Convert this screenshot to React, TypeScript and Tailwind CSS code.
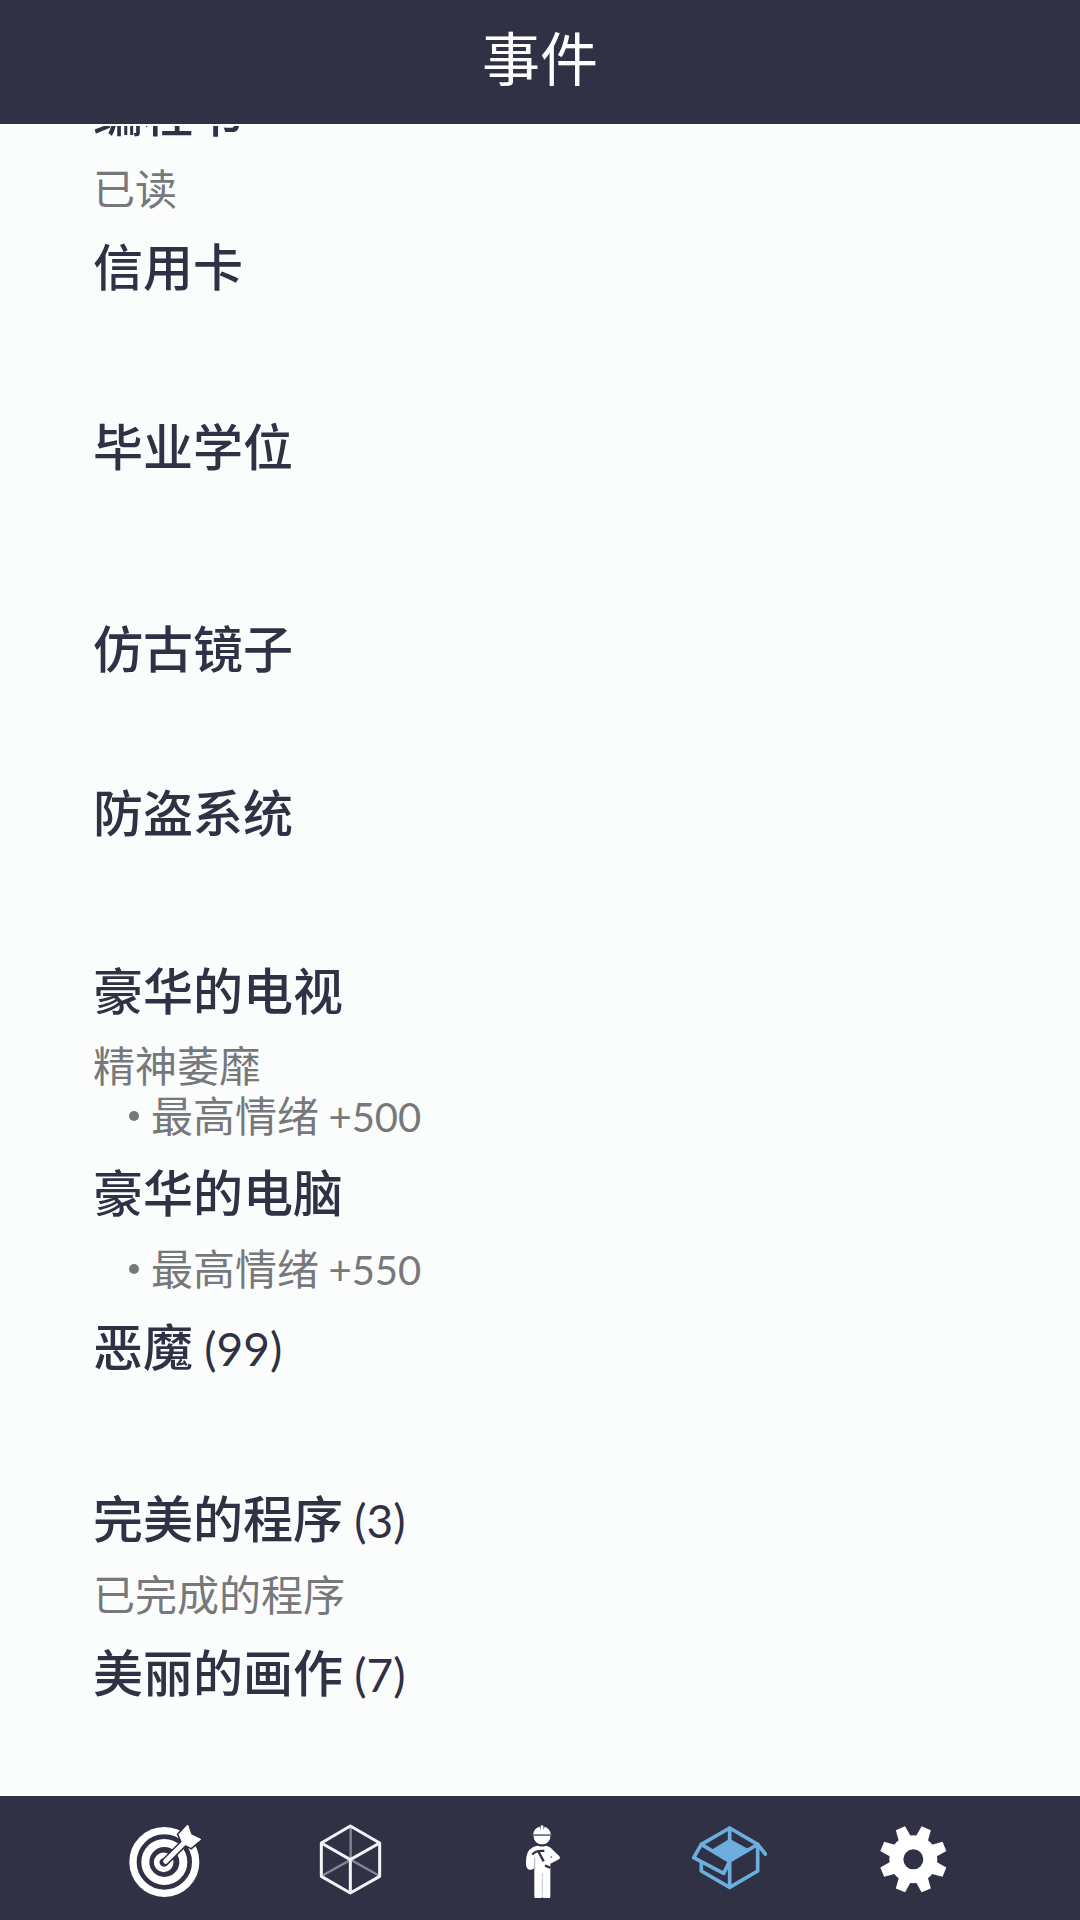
import type { ReactNode } from "react";

type Item = {
  title: string;
  count?: number;
  note?: string;
  effect?: string;
  value?: string;
  space?: string;
};

const items: Item[] = [
  { title: "编程书", note: "已读" },
  { title: "信用卡", space: "h-[78px]" },
  { title: "毕业学位", space: "h-[100px]" },
  { title: "仿古镜子", space: "h-[62px]" },
  { title: "防盗系统", space: "h-[76px]" },
  { title: "豪华的电视", note: "精神萎靡", effect: "最高情绪", value: "+500" },
  { title: "豪华的电脑", effect: "最高情绪", value: "+550" },
  { title: "恶魔", count: 99, space: "h-[70px]" },
  { title: "完美的程序", count: 3, note: "已完成的程序" },
  { title: "美丽的画作", count: 7 },
];

const teeth = [22.5, 67.5, 112.5, 157.5, 202.5, 247.5, 292.5, 337.5];

function TargetIcon() {
  return (
    <svg viewBox="47 54 240 240" className="size-20" fill="none" stroke="#ffffff">
      <circle cx="162" cy="186" r="94" strokeWidth="22" />
      <circle cx="162" cy="186" r="57" strokeWidth="24" />
      <circle cx="160" cy="187" r="21" strokeWidth="17" />
      <path d="M163 187 226 124" stroke="#313146" strokeWidth="24" strokeLinecap="round" />
      <path d="M232 75 242 104 271 118 242 142 222 132 215 124 206 103Z" fill="#313146" stroke="#313146" strokeWidth="12" />
      <path d="M166 184 230 120" strokeWidth="15" strokeLinecap="round" />
      <path d="M232 75 242 104 271 118 242 142 222 132 215 124 206 103Z" fill="#ffffff" strokeWidth="3" strokeLinejoin="round" />
    </svg>
  );
}

function CubeIcon() {
  return (
    <svg viewBox="38 54 240 240" className="size-20" fill="none" stroke="#f4f4f8" strokeWidth="9" strokeLinejoin="round">
      <path d="M151 176V82M151 179 68 226M151 179 234 226" stroke="#85859a" strokeWidth="7" />
      <path d="M150 78 238 129V229L150 279 63 229V129Z" />
      <path d="M63 129 150 179 238 129M150 179V279" />
    </svg>
  );
}

function WorkerIcon() {
  return (
    <svg viewBox="30 54 240 240" className="size-20" fill="#ffffff">
      <path d="M130 103C130 91 139 82 149 80L151 91 152 77Q156 75 160 77L161 91 163 80C174 83 182 92 182 103Z" />
      <path d="M131 108H181C181 123 171 133 156 133S131 123 131 108Z" />
      <path d="M128 105H184" stroke="#b9b9c8" strokeWidth="3" />
      <path d="M144 137Q156 142 168 137C177 139 184 143 188 149L208 169Q212 174 207 178L181 191V289Q180 298 170 298 161 298 157 290 153 298 144 298 134 298 133 289V203Q129 211 118 209 109 206 108 194 107 165 117 151 127 139 144 137Z" />
      <path d="M157 219V286" stroke="#c6c6d1" strokeWidth="3" />
      <path d="M127 164Q136 151 163 153M146 156 161 184M165 197 181 203" fill="none" stroke="#313146" strokeWidth="7" />
      <path d="M134 172V205" stroke="#85859a" strokeWidth="2" />
      <circle cx="184" cy="171" r="3" fill="#85859a" />
    </svg>
  );
}

function BoxIcon() {
  return (
    <svg viewBox="37 54 240 240" className="size-20" fill="none" stroke="#6cafdf" strokeWidth="11" strokeLinejoin="round" strokeLinecap="round">
      <path d="M80 133 165 84 249 133V213L165 262 80 213V188" />
      <path d="M165 84V120M165 186V262M249 133 272 162M249 133 165 183" />
      <path d="M165 119 220 149 165 184 113 150Z" fill="#6cafdf" strokeWidth="4" />
      <path d="M80 133 57 173 147 220 165 184Z" fill="#313146" />
    </svg>
  );
}

function GearIcon() {
  return (
    <svg viewBox="43 54 240 240" className="size-20" fill="#ffffff">
      <g transform="translate(161 178)">
        {teeth.map((angle) => (
          <path key={angle} d="M-15-101H15L20-60H-20Z" transform={`rotate(${angle})`} />
        ))}
        <circle r="51" fill="none" stroke="#ffffff" strokeWidth="42" />
      </g>
    </svg>
  );
}

const tabs: { label: string; icon: ReactNode }[] = [
  { label: "目标", icon: <TargetIcon /> },
  { label: "方块", icon: <CubeIcon /> },
  { label: "工作", icon: <WorkerIcon /> },
  { label: "物品", icon: <BoxIcon /> },
  { label: "设置", icon: <GearIcon /> },
];

export default function App() {
  return (
    <div className="flex h-screen flex-col bg-[#fbfdfc] font-['Noto_Sans_CJK_SC',sans-serif] text-[#313146]">
      <header className="flex h-[124px] shrink-0 items-center justify-center bg-[#313146] pb-3">
        <h1 className="text-[58px] leading-none text-white">事件</h1>
      </header>

      {/* Item list, scrolled part way */}
      <main className="min-h-0 flex-1 overflow-hidden border-y-2 border-white px-[93px]">
        <ul className="-mt-[67px]">
          {items.map((item) => (
            <li key={item.title}>
              <h2 className="text-[50px] leading-[102px] font-medium">
                {item.title}{" "}
                {item.count && <span className="font-['Lato',sans-serif] text-[46px] leading-none font-normal">({item.count})</span>}
              </h2>
              {item.space ? (
                <div className={item.space} />
              ) : (
                <div className="flex min-h-[52px] flex-col justify-center text-[42px] leading-[50px] text-[#77787b]">
                  {item.note && <p>{item.note}</p>}
                  {item.effect && (
                    <div className="flex items-center gap-3 pl-9">
                      <span className="mt-1 size-2.5 rounded-full bg-[#77787b]" />
                      <p>
                        {item.effect} <span className="font-['Lato',sans-serif] text-[40px] leading-none">{item.value}</span>
                      </p>
                    </div>
                  )}
                </div>
              )}
            </li>
          ))}
        </ul>
      </main>

      <nav className="grid h-[124px] shrink-0 grid-cols-5 bg-[#313146] px-[72px]">
        {tabs.map((tab) => (
          <button key={tab.label} type="button" aria-label={tab.label} className="flex cursor-pointer items-center justify-center">
            {tab.icon}
          </button>
        ))}
      </nav>
    </div>
  );
}
